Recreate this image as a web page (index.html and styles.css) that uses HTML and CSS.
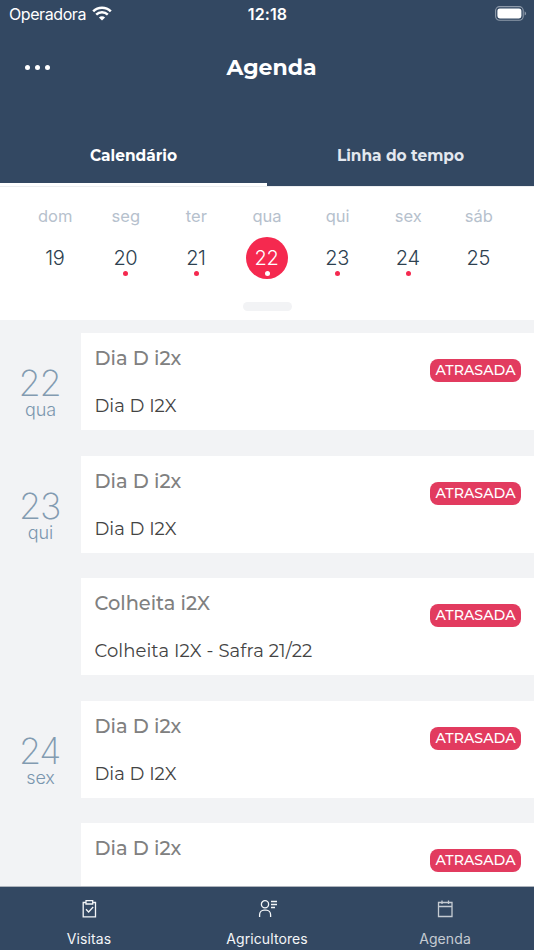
FILE: index.html
```html
<!DOCTYPE html>
<html lang="pt-BR">
<head>
<meta charset="utf-8">
<meta name="viewport" content="width=device-width, initial-scale=1">
<title>Agenda</title>
<link rel="stylesheet" href="styles.css">
</head>
<body>
<div class="app">
  <header class="header">
    <div class="status">
      <div class="carrier"><span>Operadora</span>
        <svg class="wifi" viewBox="0 0 20 15" fill="none"><path d="M1.2 5.4a12.6 12.6 0 0 1 17.6 0" stroke="#fff" stroke-width="2.6"/><path d="M4.2 8.6a8.3 8.3 0 0 1 11.6 0" stroke="#fff" stroke-width="2.5"/><path d="M10 14.6l-3.1-3.1a4.4 4.4 0 0 1 6.2 0z" fill="#fff"/></svg>
      </div>
      <div class="clock">12:18</div>
      <svg class="battery" viewBox="0 0 32 15" fill="none"><rect x=".6" y=".6" width="27.6" height="13.6" rx="4" stroke="#8e9aaa" stroke-width="1.1"/><rect x="2.4" y="2.4" width="24" height="10" rx="2.4" fill="#fff"/><path d="M29.6 5.2c2 .8 2 3.6 0 4.4z" fill="#8e9aaa"/></svg>
    </div>
    <div class="titlebar">
      <div class="more"><i></i><i></i><i></i></div>
      <h1>Agenda</h1>
    </div>
    <nav class="tabs">
      <div class="tab active">Calendário</div>
      <div class="tab">Linha do tempo</div>
    </nav>
  </header>
  <section class="week">
    <div class="days">
      <div class="day"><span>dom</span><b>19</b></div>
      <div class="day marked"><span>seg</span><b>20</b></div>
      <div class="day marked"><span>ter</span><b>21</b></div>
      <div class="day marked today"><span>qua</span><b>22</b></div>
      <div class="day marked"><span>qui</span><b>23</b></div>
      <div class="day marked"><span>sex</span><b>24</b></div>
      <div class="day"><span>sáb</span><b>25</b></div>
    </div>
    <div class="handle"></div>
  </section>
  <main class="list">
    <div class="row"><div class="date"><b>22</b><span>qua</span></div><article class="card"><div><h2>Dia D i2x</h2><p>Dia D I2X</p></div><em class="badge">ATRASADA</em></article></div>
    <div class="row"><div class="date"><b>23</b><span>qui</span></div><article class="card"><div><h2>Dia D i2x</h2><p>Dia D I2X</p></div><em class="badge">ATRASADA</em></article></div>
    <div class="row"><div class="date"></div><article class="card"><div><h2>Colheita i2X</h2><p class="season">Colheita I2X - Safra 21/22</p></div><em class="badge">ATRASADA</em></article></div>
    <div class="row"><div class="date"><b>24</b><span>sex</span></div><article class="card"><div><h2>Dia D i2x</h2><p>Dia D I2X</p></div><em class="badge">ATRASADA</em></article></div>
    <div class="row"><div class="date"></div><article class="card"><div><h2>Dia D i2x</h2></div><em class="badge">ATRASADA</em></article></div>
  </main>
  <footer class="bottom">
    <div class="nav"><svg viewBox="0 0 20 20"><path d="M7 3.500H4.200v14.300h12.300V3.500h-2.800M7 1.700h6.700v3.300H7zM7 10.300l2.600 2.700 4.600-5"/></svg><span>Visitas</span></div>
    <div class="nav"><svg viewBox="0 0 20 20"><circle cx="8" cy="5.300" r="3.600"/><path d="M2.600 18v-2.300a4.500 4.500 0 0 1 4.500-4.500h2a4.500 4.500 0 0 1 4.500 4.500V18M14 2.500h6M14 5.500h6M14 8.500h4"/></svg><span>Agricultores</span></div>
    <div class="nav current"><svg viewBox="0 0 20 20"><path d="M3.500 3.500h13.500v14H3.500zM3.500 7.500h13.500M7 1.500v3.500M13.500 1.500v3.500"/></svg><span>Agenda</span></div>
  </footer>
</div>
</body>
</html>
```
FILE: styles.css
```css
* { box-sizing: border-box; }
body { margin: 0; font-family: Inter, "Liberation Sans", sans-serif; }
.app { width: 534px; height: 950px; display: flex; flex-direction: column; overflow: hidden; background: #f2f3f5; }
h1, h2, p { margin: 0; }
b, em { font-weight: inherit; font-style: normal; }

.header { height: 186px; flex: none; display: flex; flex-direction: column; background: #334862; color: #fff; }
.status { height: 28px; display: grid; grid-template-columns: 1fr auto 1fr; align-items: center; padding: 0 8px 0 9px; font-size: 16px; }
.carrier { display: flex; align-items: center; gap: 6px; letter-spacing: -.42px; }
.wifi { width: 20px; height: 15px; margin-top: -2px; }
.clock { font-weight: 600; letter-spacing: .1px; }
.battery { width: 32px; height: 15px; justify-self: end; margin: -1px -1px 0 0; }
.titlebar { height: 78px; display: grid; grid-template-columns: 100px 1fr 91px; align-items: center; }
.more { display: flex; gap: 5px; padding-left: 25px; }
.more i { width: 5px; height: 5px; border-radius: 50%; background: #fff; }
h1 { font: 700 22px/28px Montserrat, Inter, sans-serif; text-align: center; padding-top: 2px; }
.tabs { flex: 1; display: flex; align-items: flex-end; }
.tab { flex: 1; height: 62px; text-align: center; font: 700 15.400px/63px Montserrat, Inter, sans-serif; color: #e3e8ef; }
.tab.active { color: #fff; border-bottom: 3px solid #fff; }

.week { height: 134px; flex: none; background: #fff; border-top: 1px solid #eceef0; }
.days { display: grid; grid-template-columns: repeat(7, 70.600px); justify-content: center; padding-top: 19px; }
.day { display: flex; flex-direction: column; align-items: center; gap: 11px; }
.day span { font-size: 16.500px; line-height: 20px; font-weight: 400; color: #b6c1cd; letter-spacing: 0; }
.day b { position: relative; width: 42px; height: 42px; border-radius: 50%; font-size: 20px; line-height: 43px; font-weight: 300; letter-spacing: -.4px; padding-right: 1px; text-align: center; color: #2d4150; }
.marked b::after { content: ""; position: absolute; left: 18.500px; bottom: 3px; width: 5px; height: 5px; border-radius: 50%; background: #f5294f; }
.day.today b { background: #f5294f; color: #fff; }
.today b::after { background: #fff; }
.handle { width: 49px; height: 9px; margin: 23px auto 0; border-radius: 5px; background: #f2f3f5; }

.list { flex: 1; min-height: 0; overflow: hidden; padding-top: 13px; }
.row { display: flex; height: 97px; margin-bottom: 25.500px; }
.date { width: 81px; flex: none; display: flex; flex-direction: column; align-items: center; padding-top: 33px; color: #7a96ae; }
.date b { font: 200 36px/35px Inter, sans-serif; letter-spacing: -1.300px; padding-right: 2px; color: #829bb1; }
.date span { font-size: 18px; line-height: 18px; font-weight: 300; letter-spacing: -.1px; }
.card { flex: 1; display: flex; justify-content: space-between; background: #fff; padding: 12px 13px 0 13.500px; }
.card h2 { font: 500 19.400px/27px Montserrat, Inter, sans-serif; color: #808080; }
.card p { font: 400 18px/24px Montserrat, Inter, sans-serif; color: #434343; margin-top: 22px; }
.card .season { letter-spacing: .11px; }
.badge { width: 91px; height: 23px; margin-top: 14px; border-radius: 8px; background: #e23b5f; color: #fff; text-align: center; font: 500 14.200px/23px Montserrat, Inter, sans-serif; }

.bottom { height: 64px; flex: none; display: flex; background: #334862; color: #f4f6f8; border-top: 1px solid #aeb4bc; }
.nav { flex: 1; display: flex; flex-direction: column; align-items: center; padding-top: 12px; font-size: 14px; line-height: 18px; letter-spacing: .1px; }
.nav svg { width: 20px; height: 20px; margin-bottom: 11px; fill: none; stroke: currentColor; stroke-width: 1.300; }
.current { color: #c5cbd2; }
```
